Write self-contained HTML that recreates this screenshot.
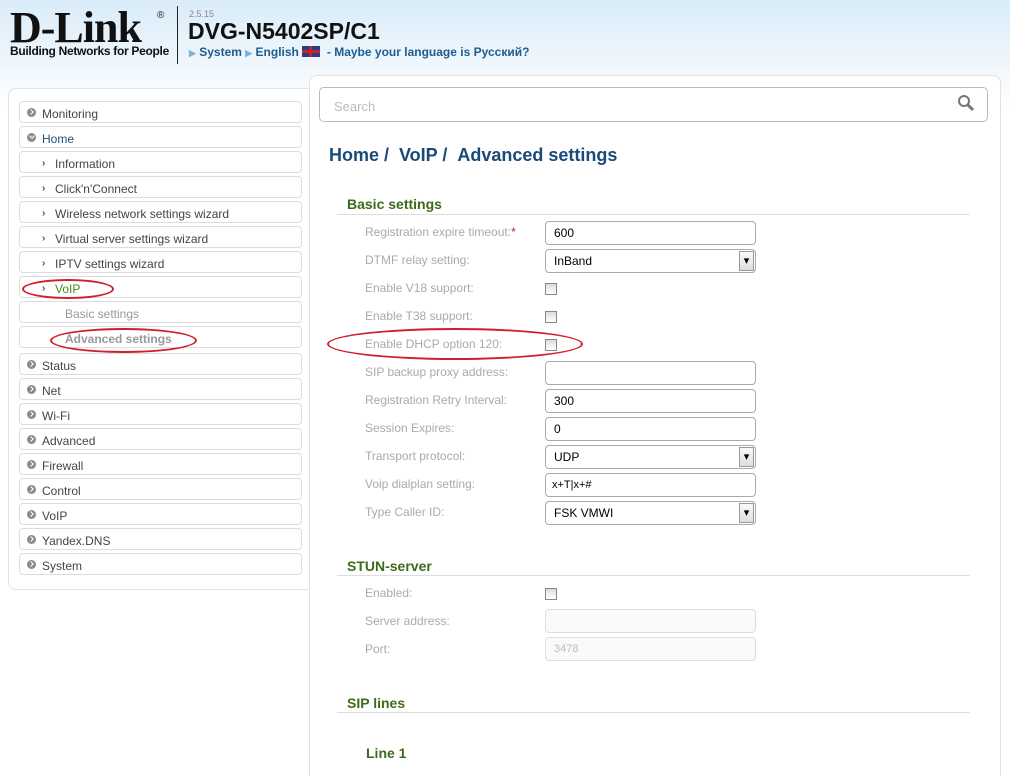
<!DOCTYPE html>
<html style="background:#fff;overflow:hidden;height:776px"><head><meta charset="utf-8"><style>
html,body{margin:0;width:1010px;height:776px;overflow:hidden}
body{font-family:"Liberation Sans",Arial,sans-serif;background:linear-gradient(#d9ecf9 0px,#eef6fc 60px,#fff 110px,#fff 776px);position:relative}
.a{position:absolute}
.side{left:8px;top:88px;width:305px;height:500px;background:#fff;border:1px solid #e2e2e2;border-radius:8px}
.it{position:absolute;left:19px;width:283px;height:22px;border:1px solid #ddd;border-radius:4px;background:#fff;font-size:12px;color:#444;line-height:24px;box-sizing:border-box}
.it .d{position:absolute;left:7px;top:6px;width:9px;height:9px;border-radius:50%;background:#8a8a8a}
.it .d:after{content:"";position:absolute;left:2px;top:2px;width:3px;height:3px;border-right:1.5px solid #fff;border-bottom:1.5px solid #fff;transform:rotate(-45deg)}
.it.open .d:after{transform:rotate(45deg);left:2.5px;top:1px}
.it .t{position:absolute;left:22px}
.it .c{position:absolute;left:22px;color:#1f5c8c;font-size:10px;font-weight:bold}
.it .s{position:absolute;left:35px}
.main{left:309px;top:75px;width:690px;height:720px;background:#fff;border:1px solid #e2e2e2;border-radius:8px}
.lab{position:absolute;left:365px;font-size:12px;color:#aaa}
.inp{position:absolute;left:545px;width:211px;height:24px;border:1px solid #aaa;border-radius:4px;background:#fff;box-sizing:border-box;font-size:12px;line-height:23px;padding-left:8px;color:#000}
.inp.dis{border-color:#ddd;background:#fafafa;color:#bbb}
.sel:after{content:"▾";position:absolute;right:1px;top:1px;width:15px;height:20px;background:linear-gradient(#fafafa,#ddd);border:1px solid #999;box-sizing:border-box;font-size:11px;line-height:18px;text-align:center;color:#000}
.cb{position:absolute;left:545px;width:12px;height:12px;border:1px solid #888;background:linear-gradient(#ddd,#fff);box-sizing:border-box}
.h{position:absolute;left:347px;font-size:14px;font-weight:bold;color:#3d6b1a}
.ln{position:absolute;left:337px;width:633px;height:1px;background:#ddd}
.ell{position:absolute;border:2px solid #d0202a;border-radius:50%}
</style></head><body>
<div class="a" style="left:10px;top:6px;font-family:'Liberation Serif',serif;font-weight:bold;font-size:44px;letter-spacing:-1px;color:#111;line-height:44px">D-Link</div>
<div class="a" style="left:157px;top:10px;font-size:10px;color:#222">®</div>
<div class="a" style="left:10px;top:44px;font-size:12px;font-weight:bold;color:#111;letter-spacing:-0.3px">Building Networks for People</div>
<div class="a" style="left:177px;top:6px;width:1px;height:58px;background:#222"></div>
<div class="a" style="left:189px;top:9px;font-size:9px;color:#888">2.5.15</div>
<div class="a" style="left:188px;top:18px;font-size:23px;font-weight:bold;color:#111">DVG-N5402SP/C1</div>
<div class="a" style="left:189px;top:45px;font-size:12px;font-weight:bold;color:#1f5c8c"><span style="color:#7ab3dd;font-size:9px">▶</span> System <span style="color:#7ab3dd;font-size:9px">▶</span> English <span style="display:inline-block;width:18px;height:11px;background:#243f8f;vertical-align:-1px;position:relative"><span style="position:absolute;left:0;top:4px;width:18px;height:3px;background:#c22"></span><span style="position:absolute;left:7px;top:0;width:3px;height:11px;background:#c22"></span></span> &nbsp;- Maybe your language is Русский?</div>

<div class="a side"></div>
<div class="it" style="top:101px"><span class="d"></span><span class="t">Monitoring</span></div>
<div class="it open" style="top:126px"><span class="d"></span><span class="t" style="color:#1f4f7a">Home</span></div>
<div class="it" style="top:151px"><span class="c">›</span><span class="s">Information</span></div>
<div class="it" style="top:176px"><span class="c">›</span><span class="s">Click'n'Connect</span></div>
<div class="it" style="top:201px"><span class="c">›</span><span class="s">Wireless network settings wizard</span></div>
<div class="it" style="top:226px"><span class="c">›</span><span class="s">Virtual server settings wizard</span></div>
<div class="it" style="top:251px"><span class="c">›</span><span class="s">IPTV settings wizard</span></div>
<div class="it" style="top:276px"><span class="c">›</span><span class="s" style="color:#4a8a1a">VoIP</span></div>
<div class="it" style="top:301px"><span class="s" style="left:45px;color:#999">Basic settings</span></div>
<div class="it" style="top:326px"><span class="s" style="left:45px;color:#999;font-weight:bold">Advanced settings</span></div>
<div class="it" style="top:353px"><span class="d"></span><span class="t">Status</span></div>
<div class="it" style="top:378px"><span class="d"></span><span class="t">Net</span></div>
<div class="it" style="top:403px"><span class="d"></span><span class="t">Wi-Fi</span></div>
<div class="it" style="top:428px"><span class="d"></span><span class="t">Advanced</span></div>
<div class="it" style="top:453px"><span class="d"></span><span class="t">Firewall</span></div>
<div class="it" style="top:478px"><span class="d"></span><span class="t">Control</span></div>
<div class="it" style="top:503px"><span class="d"></span><span class="t">VoIP</span></div>
<div class="it" style="top:528px"><span class="d"></span><span class="t">Yandex.DNS</span></div>
<div class="it" style="top:553px"><span class="d"></span><span class="t">System</span></div>
<div class="ell" style="left:22px;top:279px;width:88px;height:16px"></div>
<div class="ell" style="left:50px;top:328px;width:143px;height:21px"></div>

<div class="a main"></div>
<div class="a" style="left:319px;top:87px;width:669px;height:35px;border:1px solid #bbb;border-radius:5px;box-sizing:border-box;background:#fff"></div>
<div class="a" style="left:334px;top:99px;font-size:13px;color:#bbb">Search</div>
<svg class="a" style="left:957px;top:94px" width="18" height="18"><circle cx="7" cy="7" r="5" fill="none" stroke="#777" stroke-width="2"/><line x1="11" y1="11" x2="16" y2="16" stroke="#777" stroke-width="3"/></svg>
<div class="a" style="left:329px;top:145px;font-size:18px;font-weight:bold;color:#1a4a78">Home / &nbsp;VoIP / &nbsp;Advanced settings</div>

<div class="h" style="top:196px">Basic settings</div><div class="ln" style="top:214px"></div>
<div class="lab" style="top:225px">Registration expire timeout:<span style="color:#b02050">*</span></div><div class="inp" style="top:221px">600</div>
<div class="lab" style="top:253px">DTMF relay setting:</div><div class="inp sel" style="top:249px">InBand</div>
<div class="lab" style="top:281px">Enable V18 support:</div><div class="cb" style="top:283px"></div>
<div class="lab" style="top:309px">Enable T38 support:</div><div class="cb" style="top:311px"></div>
<div class="lab" style="top:337px">Enable DHCP option 120:</div><div class="cb" style="top:339px"></div>
<div class="lab" style="top:365px">SIP backup proxy address:</div><div class="inp" style="top:361px"></div>
<div class="lab" style="top:393px">Registration Retry Interval:</div><div class="inp" style="top:389px">300</div>
<div class="lab" style="top:421px">Session Expires:</div><div class="inp" style="top:417px">0</div>
<div class="lab" style="top:449px">Transport protocol:</div><div class="inp sel" style="top:445px">UDP</div>
<div class="lab" style="top:477px">Voip dialplan setting:</div><div class="inp" style="top:473px;padding-left:6px;font-size:11px">x+T|x+#</div>
<div class="lab" style="top:505px">Type Caller ID:</div><div class="inp sel" style="top:501px">FSK VMWI</div>
<div class="ell" style="left:327px;top:328px;width:252px;height:28px"></div>

<div class="h" style="top:558px">STUN-server</div><div class="ln" style="top:575px"></div>
<div class="lab" style="top:586px">Enabled:</div><div class="cb" style="top:588px"></div>
<div class="lab" style="top:614px">Server address:</div><div class="inp dis" style="top:609px"></div>
<div class="lab" style="top:642px">Port:</div><div class="inp dis" style="top:637px;font-size:11px">3478</div>

<div class="h" style="top:695px">SIP lines</div><div class="ln" style="top:712px"></div>
<div class="h" style="top:745px;left:366px">Line 1</div>
</body></html>
